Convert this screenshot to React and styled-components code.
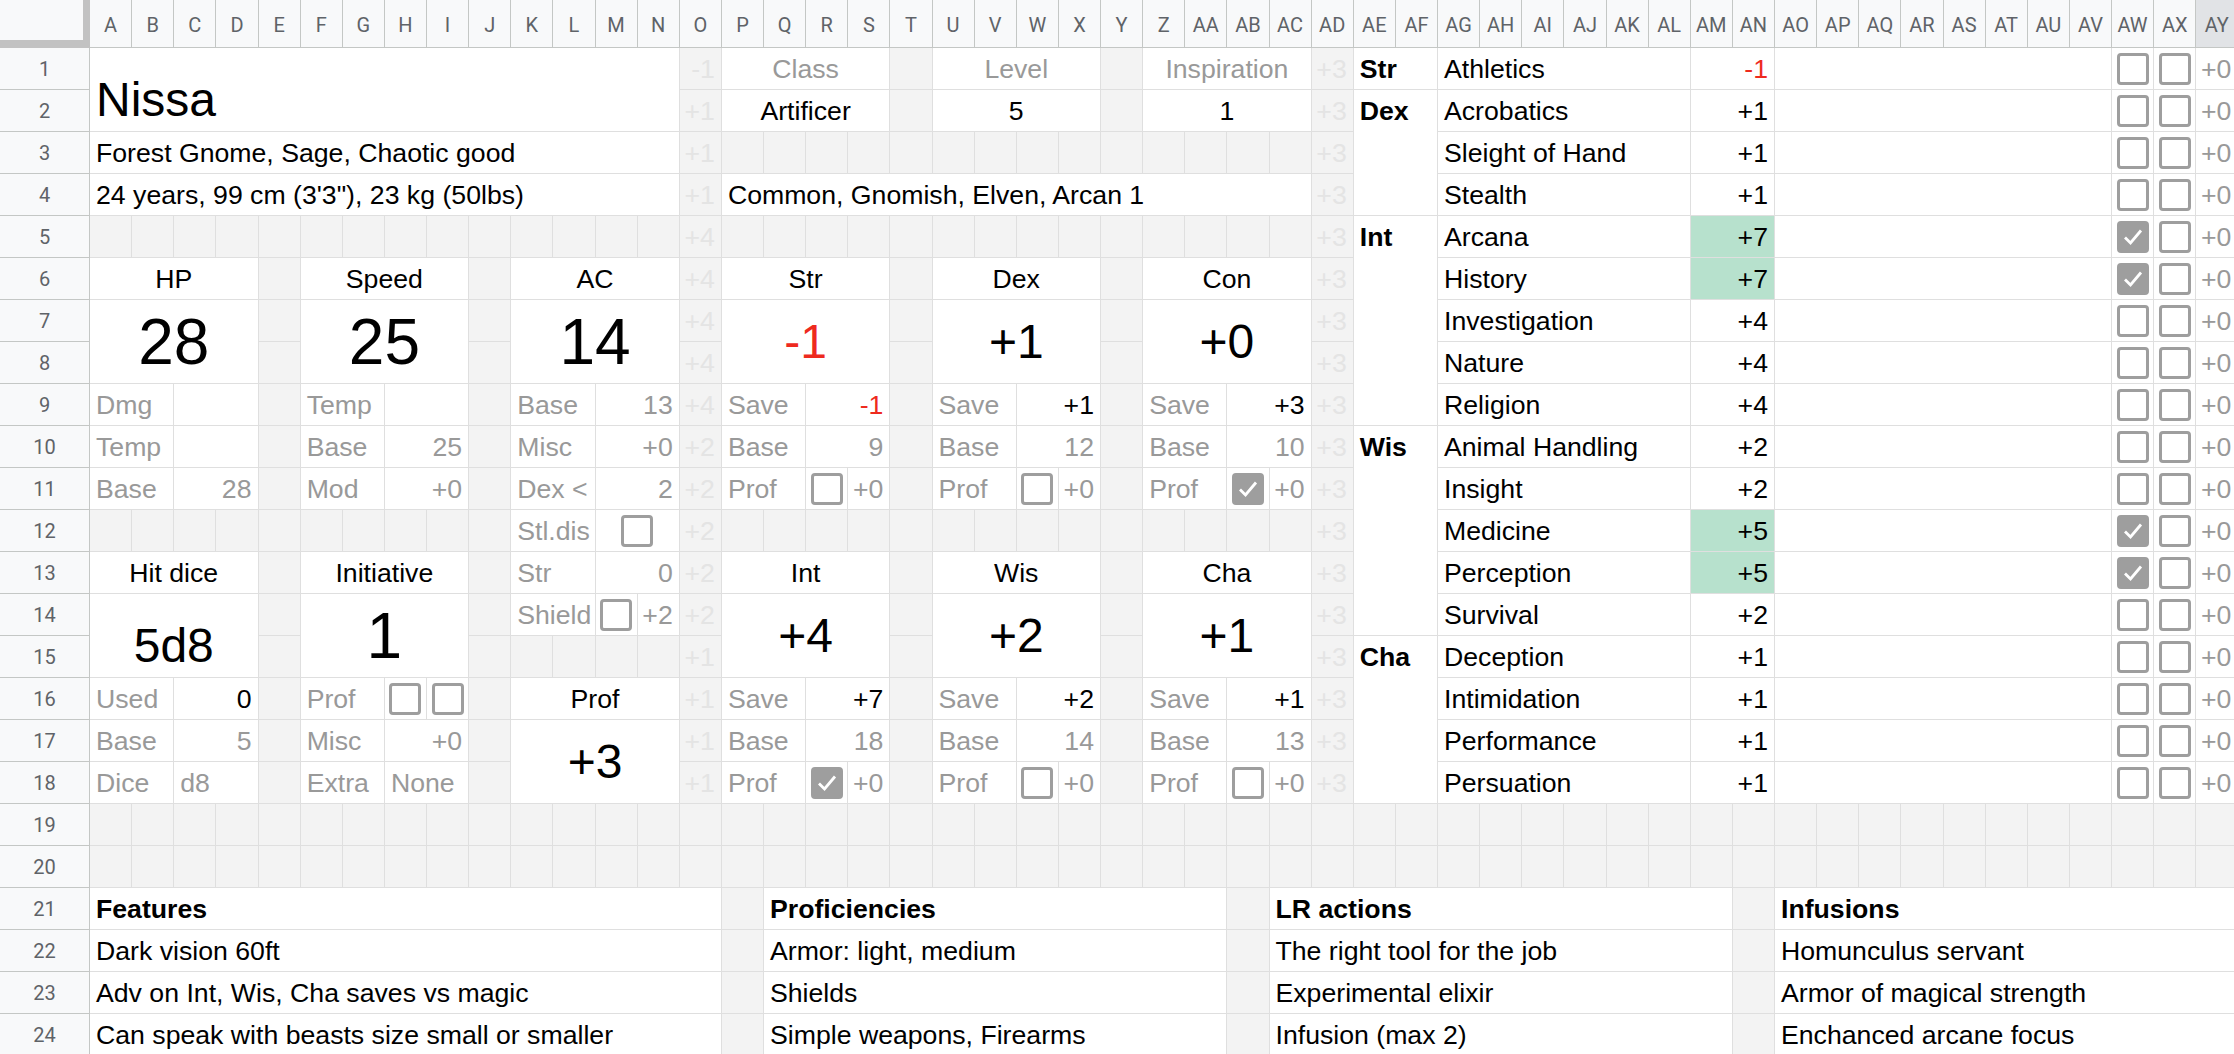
import React from "react";
import styled, { createGlobalStyle } from "styled-components";

const COLS = 51;
const ROWS = 24;

const GlobalStyle = createGlobalStyle`
  * { box-sizing: border-box; }
  html, body { margin: 0; padding: 0; background: #fff; overflow: hidden; }
  body { font-family: "Liberation Sans", Arial, sans-serif; }
`;

// whole sheet is one grid: header row / row-number column + data cells
const Sheet = styled.div`
  display: grid;
  grid-template-columns: 90px repeat(${COLS}, 42.14px);
  grid-template-rows: 48px repeat(${ROWS}, 42px);
  width: max-content;
`;

const Corner = styled.div`
  grid-column: 1;
  grid-row: 1;
  background: #f8f9fa;
  border-right: 7px solid #c2c2c2;
  border-bottom: 8px solid #c2c2c2;
`;

const ColHead = styled.div`
  grid-column: ${p => p.$c + 1};
  grid-row: 1;
  display: flex;
  align-items: center;
  justify-content: center;
  background: ${p => (p.$active ? "#e1e3e6" : "#f8f9fa")};
  border-right: 1px solid #c4c7c5;
  border-bottom: 1px solid #c4c7c5;
  font-family: Roboto, "Liberation Sans", sans-serif;
  font-size: 20px;
  color: #5f6368;
  padding-top: 2px;
`;

const RowHead = styled.div`
  grid-column: 1;
  grid-row: ${p => p.$r + 1};
  display: flex;
  align-items: center;
  justify-content: center;
  background: #f8f9fa;
  border-right: 1px solid #c4c7c5;
  border-bottom: 1px solid #c4c7c5;
  font-family: Roboto, "Liberation Sans", sans-serif;
  font-size: 20px;
  color: #5f6368;
`;

const TONES = {
  ink: "#000",
  muted: "#999999",
  neg: "#ee2a1e",
  faint: "#e4e4e4",
};

const FILLS = {
  white: "#fff",
  gray: "#f3f3f3",
  green: "#b7e1cd",
};

const JUSTIFY = { left: "flex-start", center: "center", right: "flex-end" };
const VALIGN = { top: "flex-start", middle: "center", bottom: "flex-end" };
const PAD = { top: "6px 6px 0", middle: "0 6px", bottom: "0 6px 4px" };

const Cell = styled.div`
  grid-column: ${p => p.$c + 1} / span ${p => p.$cs};
  grid-row: ${p => p.$r + 1} / span ${p => p.$rs};
  display: flex;
  align-items: ${p => VALIGN[p.$v || "bottom"]};
  justify-content: ${p => JUSTIFY[p.$align || "left"]};
  padding: ${p => PAD[p.$v || "bottom"]};
  background: ${p => FILLS[p.$fill || "white"]};
  border-right: 1px solid #dfdfdf;
  border-bottom: 1px solid #dfdfdf;
  color: ${p => TONES[p.$tone || "ink"]};
  font-size: ${p => p.$size || 26.67}px;
  font-weight: ${p => (p.$bold ? 700 : 400)};
  white-space: nowrap;
  overflow: hidden;
  min-width: 0;
`;

const BoxCell = styled(Cell)`
  align-items: center;
  justify-content: center;
  padding: 0;
`;

const Box = styled.span`
  width: 32px;
  height: 32px;
  border: 3.5px solid #9e9e9e;
  border-radius: 4px;
  background: ${p => (p.$on ? "#9e9e9e" : "transparent")};
  display: flex;
  align-items: center;
  justify-content: center;
`;

const Check = ({ on }) => (
  <Box $on={on}>
    {on && (
      <svg width="22" height="22" viewBox="0 0 22 22">
        <polyline points="3,11.5 8.5,17 19,4.5" fill="none" stroke="#fff" strokeWidth="2.8" />
      </svg>
    )}
  </Box>
);

// "AB" -> 28
const colNum = s => s.split("").reduce((n, ch) => n * 26 + ch.charCodeAt(0) - 64, 0);
const colName = n => {
  let s = "";
  while (n > 0) {
    const m = (n - 1) % 26;
    s = String.fromCharCode(65 + m) + s;
    n = Math.floor((n - 1) / 26);
  }
  return s;
};

const buildCells = () => {
  const items = [];
  const put = (c, r, cs, rs, o = {}) => items.push({ c, r, cs, rs, ...o });
  const add = (ref, text, o = {}) => {
    const m = ref.match(/^([A-Z]+)(\d+)(?::([A-Z]+)(\d+))?$/);
    const c = colNum(m[1]);
    const r = +m[2];
    const c2 = m[3] ? colNum(m[3]) : c;
    const r2 = m[4] ? +m[4] : r;
    put(c, r, c2 - c + 1, r2 - r + 1, { text, ...o });
  };
  const box = (ref, on = false) => add(ref, "", { box: true, on });

  const stat = (col, r, label, value, size, o = {}) => {
    const c = colNum(col);
    put(c, r, 4, 1, { text: label, align: "center" });
    put(c, r + 1, 4, 2, { text: value, align: "center", size, ...o });
  };
  const pair = (col, r, label, value, o = {}) => {
    const c = colNum(col);
    put(c, r, 2, 1, { text: label, tone: "muted" });
    put(c + 2, r, 2, 1, { text: value, align: "right", tone: "muted", ...o });
  };
  const profRow = (col, r, on) => {
    const c = colNum(col);
    put(c, r, 2, 1, { text: "Prof", tone: "muted" });
    put(c + 2, r, 1, 1, { box: true, on });
    put(c + 3, r, 1, 1, { text: "+0", align: "right", tone: "muted" });
  };

  // name + class header
  add("A1:N2", "Nissa", { size: 48 });
  add("P1:S1", "Class", { align: "center", tone: "muted" });
  add("U1:X1", "Level", { align: "center", tone: "muted" });
  add("Z1:AC1", "Inspiration", { align: "center", tone: "muted" });
  add("P2:S2", "Artificer", { align: "center" });
  add("U2:X2", "5", { align: "center" });
  add("Z2:AC2", "1", { align: "center" });
  add("A3:N3", "Forest Gnome, Sage, Chaotic good");
  add("A4:N4", "24 years, 99 cm (3'3\"), 23 kg (50lbs)");
  add("P4:AC4", "Common, Gnomish, Elven, Arcan 1");

  // HP / Speed / AC
  stat("A", 6, "HP", "28", 64);
  pair("A", 9, "Dmg", "");
  pair("A", 10, "Temp", "");
  pair("A", 11, "Base", "28");
  stat("F", 6, "Speed", "25", 64);
  pair("F", 9, "Temp", "");
  pair("F", 10, "Base", "25");
  pair("F", 11, "Mod", "+0");
  stat("K", 6, "AC", "14", 64);
  pair("K", 9, "Base", "13");
  pair("K", 10, "Misc", "+0");
  pair("K", 11, "Dex <", "2");
  add("K12:L12", "Stl.dis", { tone: "muted" });
  box("M12:N12");
  pair("K", 13, "Str", "0");
  add("K14:L14", "Shield", { tone: "muted" });
  box("M14");
  add("N14", "+2", { align: "right", tone: "muted" });

  // Hit dice / Initiative / Prof
  stat("A", 13, "Hit dice", "5d8", 48);
  pair("A", 16, "Used", "0", { tone: "ink" });
  pair("A", 17, "Base", "5");
  pair("A", 18, "Dice", "d8", { align: "left" });
  stat("F", 13, "Initiative", "1", 64);
  add("F16:G16", "Prof", { tone: "muted" });
  box("H16");
  box("I16");
  pair("F", 17, "Misc", "+0");
  pair("F", 18, "Extra", "None", { align: "left" });
  stat("K", 16, "Prof", "+3", 48, { v: "middle" });

  // abilities
  const abilities = [
    ["P", 6, "Str", "-1", "-1", "9", false],
    ["U", 6, "Dex", "+1", "+1", "12", false],
    ["Z", 6, "Con", "+0", "+3", "10", true],
    ["P", 13, "Int", "+4", "+7", "18", true],
    ["U", 13, "Wis", "+2", "+2", "14", false],
    ["Z", 13, "Cha", "+1", "+1", "13", false],
  ];
  abilities.forEach(([col, r, name, mod, save, base, prof]) => {
    stat(col, r, name, mod, 48, { v: "middle", tone: mod.startsWith("-") ? "neg" : "ink" });
    pair(col, r + 3, "Save", save, { tone: save.startsWith("-") ? "neg" : "ink" });
    pair(col, r + 4, "Base", base);
    profRow(col, r + 5, prof);
  });

  // skills
  [["Str", 1, 1], ["Dex", 2, 3], ["Int", 5, 5], ["Wis", 10, 5], ["Cha", 15, 4]].forEach(([ab, r, n]) =>
    put(colNum("AE"), r, 2, n, { text: ab, bold: true, v: "top" })
  );
  const skills = [
    ["Athletics", "-1"], ["Acrobatics", "+1"], ["Sleight of Hand", "+1"], ["Stealth", "+1"],
    ["Arcana", "+7", true], ["History", "+7", true], ["Investigation", "+4"], ["Nature", "+4"],
    ["Religion", "+4"], ["Animal Handling", "+2"], ["Insight", "+2"], ["Medicine", "+5", true],
    ["Perception", "+5", true], ["Survival", "+2"], ["Deception", "+1"], ["Intimidation", "+1"],
    ["Performance", "+1"], ["Persuation", "+1"],
  ];
  skills.forEach(([name, val, prof], i) => {
    const r = i + 1;
    put(colNum("AG"), r, 6, 1, { text: name });
    put(colNum("AM"), r, 2, 1, {
      text: val,
      align: "right",
      fill: prof ? "green" : "white",
      tone: val.startsWith("-") ? "neg" : "ink",
    });
    put(colNum("AO"), r, 8, 1, { text: "" });
    put(colNum("AW"), r, 1, 1, { box: true, on: !!prof });
    put(colNum("AX"), r, 1, 1, { box: true, on: false });
    put(colNum("AY"), r, 1, 1, { text: "+0", align: "right", tone: "muted" });
  });

  // lists at the bottom
  const lists = [
    ["A", "O", "Features", ["Dark vision 60ft", "Adv on Int, Wis, Cha saves vs magic", "Can speak with beasts size small or smaller"]],
    ["Q", "AA", "Proficiencies", ["Armor: light, medium", "Shields", "Simple weapons, Firearms"]],
    ["AC", "AM", "LR actions", ["The right tool for the job", "Experimental elixir", "Infusion (max 2)"]],
    ["AO", "AY", "Infusions", ["Homunculus servant", "Armor of magical strength", "Enchanced arcane focus"]],
  ];
  lists.forEach(([a, b, title, rows]) => {
    add(`${a}21:${b}21`, title, { bold: true });
    rows.forEach((t, i) => add(`${a}${22 + i}:${b}${22 + i}`, t));
  });

  // everything else is the grey backdrop; O and AD hold faint helper numbers
  const helperO = ["-1", "+1", "+1", "+1", "+4", "+4", "+4", "+4", "+4", "+2", "+2", "+2", "+2", "+2", "+1", "+1", "+1", "+1"];
  const taken = new Set();
  items.forEach(it => {
    for (let r = it.r; r < it.r + it.rs; r++)
      for (let c = it.c; c < it.c + it.cs; c++) taken.add(`${c}:${r}`);
  });
  for (let r = 1; r <= ROWS; r++) {
    for (let c = 1; c <= COLS; c++) {
      if (taken.has(`${c}:${r}`)) continue;
      let text = "";
      if (r <= 18 && c === colNum("O")) text = helperO[r - 1];
      if (r <= 18 && c === colNum("AD")) text = "+3";
      put(c, r, 1, 1, { text, fill: "gray", tone: "faint", align: "right" });
    }
  }
  return items;
};

const cells = buildCells();

export default function App() {
  return (
    <>
      <GlobalStyle />
      <Sheet>
        <Corner />
        {Array.from({ length: COLS }, (_, i) => (
          <ColHead key={`h${i}`} $c={i + 1} $active={i + 1 === COLS}>
            {colName(i + 1)}
          </ColHead>
        ))}
        {Array.from({ length: ROWS }, (_, i) => (
          <RowHead key={`r${i}`} $r={i + 1}>
            {i + 1}
          </RowHead>
        ))}
        {cells.map((it, i) =>
          it.box ? (
            <BoxCell key={i} $c={it.c} $r={it.r} $cs={it.cs} $rs={it.rs}>
              <Check on={it.on} />
            </BoxCell>
          ) : (
            <Cell
              key={i}
              $c={it.c}
              $r={it.r}
              $cs={it.cs}
              $rs={it.rs}
              $align={it.align}
              $tone={it.tone}
              $fill={it.fill}
              $size={it.size}
              $bold={it.bold}
              $v={it.v}
            >
              {it.text}
            </Cell>
          )
        )}
      </Sheet>
    </>
  );
}
